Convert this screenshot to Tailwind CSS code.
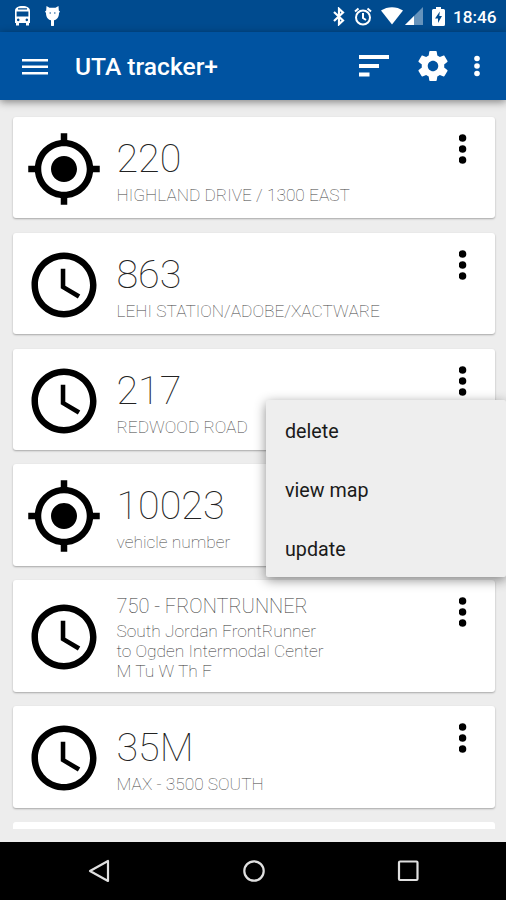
<!DOCTYPE html>
<html lang="en">

<head>
    <meta charset="UTF-8">
    <meta name="viewport" content="width=device-width, initial-scale=1.0">
    <title>UTA tracker+</title>
    <script src="https://cdn.jsdelivr.net/npm/@tailwindcss/browser@4"></script>
</head>

<body class="bg-[#ededed] font-[Roboto,sans-serif]">
    <!-- shared icons -->
    <svg class="hidden">
        <symbol id="gps" viewBox="0 0 24 24">
            <path d="M12 8c-2.210 0-4 1.790-4 4s1.790 4 4 4 4-1.790 4-4-1.790-4-4-4zm8.940 3A8.994 8.994 0 0 0 13 3.060V1h-2v2.060A8.994 8.994 0 0 0 3.060 11H1v2h2.060A8.994 8.994 0 0 0 11 20.940V23h2v-2.060A8.994 8.994 0 0 0 20.940 13H23v-2h-2.060zM12 19c-3.870 0-7-3.130-7-7s3.130-7 7-7 7 3.130 7 7-3.130 7-7 7z" />
        </symbol>
        <symbol id="clock" viewBox="0 0 24 24">
            <path d="M11.990 2C6.470 2 2 6.480 2 12s4.470 10 9.990 10C17.520 22 22 17.520 22 12S17.520 2 11.990 2zM12 20c-4.420 0-8-3.580-8-8s3.580-8 8-8 8 3.580 8 8-3.580 8-8 8zm.4-13H11v6l5.250 3.150.75-1.230-4.600-2.670z" />
        </symbol>
        <symbol id="dots" viewBox="0 0 8 30">
            <circle cx="3.500" cy="4" r="3.800" />
            <circle cx="3.500" cy="15" r="3.800" />
            <circle cx="3.500" cy="26" r="3.800" />
        </symbol>
    </svg>

    <div class="relative flex h-[900px] w-[506px] flex-col overflow-hidden">
        <!-- status bar -->
        <div class="z-10 flex h-8 shrink-0 items-center bg-[#004b8f] pl-[14px] pr-[9px] text-white">
            <svg class="h-5 w-[17px]" viewBox="0 0 17 20" fill="currentColor">
                <path fill-rule="evenodd" d="M1 5C1 1.500 4 0 8.500 0S16 1.500 16 5v12h-1v2.500h-3V17H5v2.500H2V17H1zM4 2.200v1.300h9V2.200zM2.600 5.500v5h11.800v-5zM4.200 12.600a1.300 1.300 0 1 0 .01 0zM12.800 12.600a1.300 1.300 0 1 0 .01 0z" />
            </svg>
            <svg class="ml-[14px] h-5 w-[15px]" viewBox="0 0 15 20" fill="currentColor">
                <path fill-rule="evenodd" d="M1.500 0 4.500 1.800h6L13.500 0l.3 4.500 1.200 1-1 1.500c0 4-2 6.700-5 7.200V19a1.200 1.200 0 0 1-3 0v-4.800C3 13.700 1 11 1 7L0 5.500l1.200-1zM4.500 6.500v1h1.500v-1zM9 6.500v1h1.500v-1z" />
            </svg>
            <svg class="ml-auto h-[19px] w-3" viewBox="0 0 12 19" fill="none" stroke="currentColor" stroke-width="2.200">
                <path d="m1 5 9 8.500-4 3.700V1.800L10 5.500 1 14" />
            </svg>
            <svg class="ml-[9px] h-[19px] w-[18px]" viewBox="0 0 18 19" fill="none" stroke="currentColor" stroke-width="2">
                <circle cx="9" cy="10.500" r="7" />
                <path d="M9 6v5l3 2M1 4.500 4.500 1.500M17 4.500 13.500 1.500" />
            </svg>
            <svg class="ml-[9px] h-[18px] w-[22px]" viewBox="0 0 22 18" fill="currentColor">
                <path d="M0 3.500C6.500-1 15.500-1 22 3.500L11 17.500z" />
            </svg>
            <svg class="ml-[2px] h-[18px] w-[18px]" viewBox="0 0 18 18" fill="currentColor">
                <path class="opacity-40" d="M18 0v18H0z" />
                <path d="M9 9v9H0z" />
            </svg>
            <svg class="ml-[9px] h-[19px] w-[13px]" viewBox="0 0 13 19" fill="currentColor">
                <path fill-rule="evenodd" d="M4 0h5v2h2.500Q13 2 13 3.500v14q0 1.500-1.500 1.500h-10Q0 19 0 17.500v-14Q0 2 1.500 2H4zM7.800 4.500 3 11.500h3V16l4-7H7.300z" />
            </svg>
            <span class="ml-2 w-[44px] whitespace-nowrap pt-px text-[17.200px] font-medium leading-8">18:46</span>
        </div>

        <!-- app bar -->
        <div class="z-10 flex h-[68px] shrink-0 items-center bg-[#0053a1] pl-[22px] pr-[26px] text-white shadow-[0_2px_8px_rgba(0,0,0,0.45)]">
            <svg class="mt-px h-4 w-[26px]" viewBox="0 0 26 16" fill="currentColor">
                <path d="M0 0h26v2.600H0zM0 6.500h26v2.600H0zM0 13h26v2.600H0z" />
            </svg>
            <h1 class="ml-[27px] mt-px whitespace-nowrap text-[24.600px] font-medium leading-8">UTA tracker+</h1>
            <svg class="ml-auto h-[22px] w-[30px]" viewBox="0 0 30 22" fill="currentColor">
                <path d="M0 0h30v4H0zM0 9h20v4H0zM0 17.500h10.500v4H0z" />
            </svg>
            <svg class="ml-[26px] h-9 w-9" viewBox="0 0 24 24" fill="currentColor">
                <path d="M19.430 12.980c.04-.32.070-.64.070-.98s-.03-.66-.07-.98l2.110-1.650c.19-.15.24-.42.120-.64l-2-3.460c-.12-.22-.39-.3-.61-.22l-2.490 1c-.52-.4-1.080-.73-1.690-.98l-.38-2.650C14.460 2.180 14.250 2 14 2h-4c-.25 0-.46.180-.49.420l-.38 2.650c-.61.250-1.170.59-1.690.98l-2.490-1c-.23-.09-.49 0-.61.220l-2 3.460c-.13.220-.07.490.12.640l2.110 1.650c-.04.320-.07.650-.07.980s.03.660.07.980l-2.110 1.650c-.19.150-.24.420-.12.640l2 3.460c.12.220.39.300.61.220l2.490-1c.52.400 1.080.73 1.690.98l.38 2.650c.03.240.24.420.49.420h4c.25 0 .46-.18.49-.42l.38-2.650c.61-.25 1.170-.59 1.690-.98l2.490 1c.23.090.49 0 .61-.22l2-3.460c.12-.22.070-.49-.12-.64l-2.110-1.650zM12 15.500c-1.930 0-3.500-1.570-3.500-3.500s1.570-3.500 3.500-3.500 3.500 1.570 3.500 3.500-1.570 3.500-3.500 3.500z" />
            </svg>
            <svg class="ml-[23px] h-[22px] w-[6px]" viewBox="0 0 6 22" fill="currentColor">
                <circle cx="3" cy="3.500" r="2.800" />
                <circle cx="3" cy="11" r="2.800" />
                <circle cx="3" cy="18.500" r="2.800" />
            </svg>
        </div>

        <!-- route list -->
        <div class="flex h-[729px] shrink-0 flex-col gap-[14.500px] overflow-hidden pl-[12.500px] pr-[11.500px] pt-[17px]">
            <div class="flex h-[101.300px] shrink-0 items-start rounded-[3px] bg-white pl-[12.500px] pr-[28px] shadow-[0_1px_2px_rgba(0,0,0,0.3)]">
                <svg class="mt-[13px] size-[78px]"><use href="#gps" /></svg>
                <div class="ml-[13.500px] mt-[18px] whitespace-nowrap">
                    <div class="text-[39.500px] font-thin leading-[48px] text-[#222]">220</div>
                    <div class="mt-px text-[17.350px] font-thin leading-[22px] text-[#444]">HIGHLAND DRIVE / 1300 EAST</div>
                </div>
                <svg class="ml-auto mt-[17px] h-[30px] w-2"><use href="#dots" /></svg>
            </div>

            <div class="flex h-[101.300px] shrink-0 items-start rounded-[3px] bg-white pl-[12.500px] pr-[28px] shadow-[0_1px_2px_rgba(0,0,0,0.3)]">
                <svg class="mt-[13px] size-[78px]"><use href="#clock" /></svg>
                <div class="ml-[13.500px] mt-[18px] whitespace-nowrap">
                    <div class="text-[39.500px] font-thin leading-[48px] text-[#222]">863</div>
                    <div class="mt-px text-[17.350px] font-thin leading-[22px] text-[#444]">LEHI STATION/ADOBE/XACTWARE</div>
                </div>
                <svg class="ml-auto mt-[17px] h-[30px] w-2"><use href="#dots" /></svg>
            </div>

            <div class="flex h-[101.300px] shrink-0 items-start rounded-[3px] bg-white pl-[12.500px] pr-[28px] shadow-[0_1px_2px_rgba(0,0,0,0.3)]">
                <svg class="mt-[13px] size-[78px]"><use href="#clock" /></svg>
                <div class="ml-[13.500px] mt-[18px] whitespace-nowrap">
                    <div class="text-[39.500px] font-thin leading-[48px] text-[#222]">217</div>
                    <div class="mt-px text-[17.350px] font-thin leading-[22px] text-[#444]">REDWOOD ROAD</div>
                </div>
                <svg class="ml-auto mt-[17px] h-[30px] w-2"><use href="#dots" /></svg>
            </div>

            <div class="flex h-[101.300px] shrink-0 items-start rounded-[3px] bg-white pl-[12.500px] pr-[28px] shadow-[0_1px_2px_rgba(0,0,0,0.3)]">
                <svg class="mt-[13px] size-[78px]"><use href="#gps" /></svg>
                <div class="ml-[13.500px] mt-[18px] whitespace-nowrap">
                    <div class="text-[39.500px] font-thin leading-[48px] text-[#222]">10023</div>
                    <div class="mt-px text-[17.350px] font-thin leading-[22px] text-[#444]">vehicle number</div>
                </div>
                <svg class="ml-auto mt-[17px] h-[30px] w-2"><use href="#dots" /></svg>
            </div>

            <div class="flex h-[111.800px] shrink-0 items-start rounded-[3px] bg-white pl-[12.500px] pr-[28px] shadow-[0_1px_2px_rgba(0,0,0,0.3)]">
                <svg class="mt-[17.500px] size-[78px]"><use href="#clock" /></svg>
                <div class="ml-[13.500px] mt-[14px] whitespace-nowrap">
                    <div class="text-[20px] font-thin leading-6 text-[#333]">750 - FRONTRUNNER</div>
                    <div class="mt-[3px] text-[17.350px] font-thin leading-5 text-[#333]">South Jordan FrontRunner<br>to Ogden Intermodal Center<br>M Tu W Th F</div>
                </div>
                <svg class="ml-auto mt-[17px] h-[30px] w-2"><use href="#dots" /></svg>
            </div>

            <div class="flex h-[101.300px] shrink-0 items-start rounded-[3px] bg-white pl-[12.500px] pr-[28px] shadow-[0_1px_2px_rgba(0,0,0,0.3)]">
                <svg class="mt-[13px] size-[78px]"><use href="#clock" /></svg>
                <div class="ml-[13.500px] mt-[18px] whitespace-nowrap">
                    <div class="text-[39.500px] font-thin leading-[48px] text-[#222]">35M</div>
                    <div class="mt-px text-[17.350px] font-thin leading-[22px] text-[#444]">MAX - 3500 SOUTH</div>
                </div>
                <svg class="ml-auto mt-[17px] h-[30px] w-2"><use href="#dots" /></svg>
            </div>

            <div class="h-[101.300px] shrink-0 rounded-[3px] bg-white"></div>
        </div>

        <!-- navigation bar -->
        <div class="mt-[12.500px] flex flex-1 items-start bg-black pl-[88px] pt-[17.500px] text-[#e0e0e0]">
            <svg class="h-6 w-[22px]" viewBox="0 0 22 24" fill="none" stroke="currentColor" stroke-width="2.200" stroke-linejoin="round">
                <path d="M20 2v20L2 12z" />
            </svg>
            <svg class="ml-[131.500px] h-6 w-6" viewBox="0 0 24 24" fill="none" stroke="currentColor" stroke-width="2.200">
                <circle cx="12" cy="12" r="9.700" />
            </svg>
            <svg class="ml-[130.500px] h-6 w-6" viewBox="0 0 24 24" fill="none" stroke="currentColor" stroke-width="2.200">
                <rect x="3" y="2.500" width="18.500" height="18.500" rx="1" />
            </svg>
        </div>

        <!-- popup menu -->
        <div class="absolute left-[266px] top-[400px] z-20 flex h-[177px] w-[240px] flex-col rounded-[2px] bg-[#eee] pl-[19px] pt-[1.500px] text-[19.700px] leading-[59px] text-[#1a1a1a] shadow-[0_3px_12px_rgba(0,0,0,0.45)]">
            <div class="h-[59px]">delete</div>
            <div class="h-[59px]">view map</div>
            <div class="h-[59px]">update</div>
        </div>
    </div>
</body>

</html>
